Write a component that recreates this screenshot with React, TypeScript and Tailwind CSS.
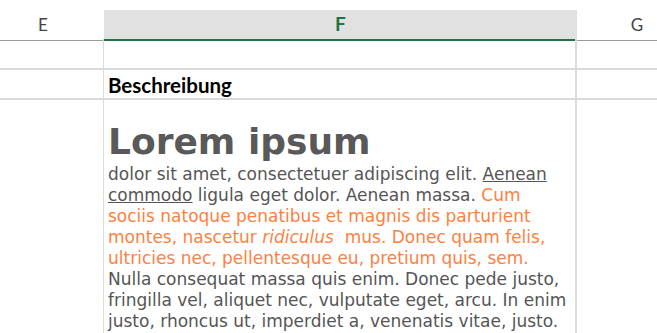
import React from "react";

const body = "font-['DejaVu_Sans',Verdana,sans-serif]";

const App = () => {
  return (
    <div className="h-[333px] w-[657px] overflow-hidden bg-white font-['Lato','Liberation_Sans',sans-serif]">
      <div className="h-[10px]" />
      {/* column headers */}
      <div className="grid h-[29px] grid-cols-[104px_473px_80px]">
        <div className="flex items-center justify-center border-b border-[#9b9b9b] text-[17px] text-[#444]">
          <span className="mr-[18px]">E</span>
        </div>
        <div className="flex items-center justify-center border-b-2 border-[#217346] bg-[#e1e1e1] text-[19px] font-bold text-[#217346]">
          F
        </div>
        <div className="flex items-center justify-center border-b border-[#9b9b9b] text-[17px] text-[#444]">
          <span className="ml-[40px]">G</span>
        </div>
      </div>
      {/* row 1 */}
      <div className="grid h-[31px] grid-cols-[104px_473px_80px] border-b-2 border-[#dadada]">
        <div className="border-r border-[#dadada]" />
        <div className="border-r-2 border-[#dadada]" />
        <div />
      </div>
      {/* row 2 */}
      <div className="grid h-[30px] grid-cols-[104px_473px_80px] border-b-2 border-[#dadada]">
        <div className="border-r border-[#dadada]" />
        <div className="flex items-end border-r-2 border-[#dadada] pb-[1px] pl-[4px] text-[20.5px] leading-[24px] font-bold text-black">
          Beschreibung
        </div>
        <div />
      </div>
      {/* row 3 */}
      <div className="grid h-[240px] grid-cols-[104px_473px_80px]">
        <div className="border-r border-[#dadada]" />
        <div className={`border-r-2 border-[#dadada] pl-[4px] pt-[19px] text-[#555] ${body}`}>
          <h1 className="text-[36px] font-bold leading-[45px] text-[#595959]">Lorem ipsum</h1>
          <p className="text-[17px] leading-[21px] whitespace-nowrap">
            dolor sit amet, consectetuer adipiscing elit. <u>Aenean </u>
            <br />
            <u>commodo</u> ligula eget dolor. Aenean massa.{" "}
            <span className="text-[#ff7f3f]">
              Cum
              <br />
              sociis natoque penatibus et magnis dis parturient
              <br />
              montes, nascetur <i>ridiculus</i>&nbsp; mus. Donec quam felis,
              <br />
              ultricies nec, pellentesque eu, pretium quis, sem.
            </span>
            <br />
            Nulla consequat massa quis enim. Donec pede justo,
            <br />
            fringilla vel, aliquet nec, vulputate eget, arcu. In enim
            <br />
            justo, rhoncus ut, imperdiet a, venenatis vitae, justo.
          </p>
        </div>
        <div />
      </div>
    </div>
  );
};

export default App;
